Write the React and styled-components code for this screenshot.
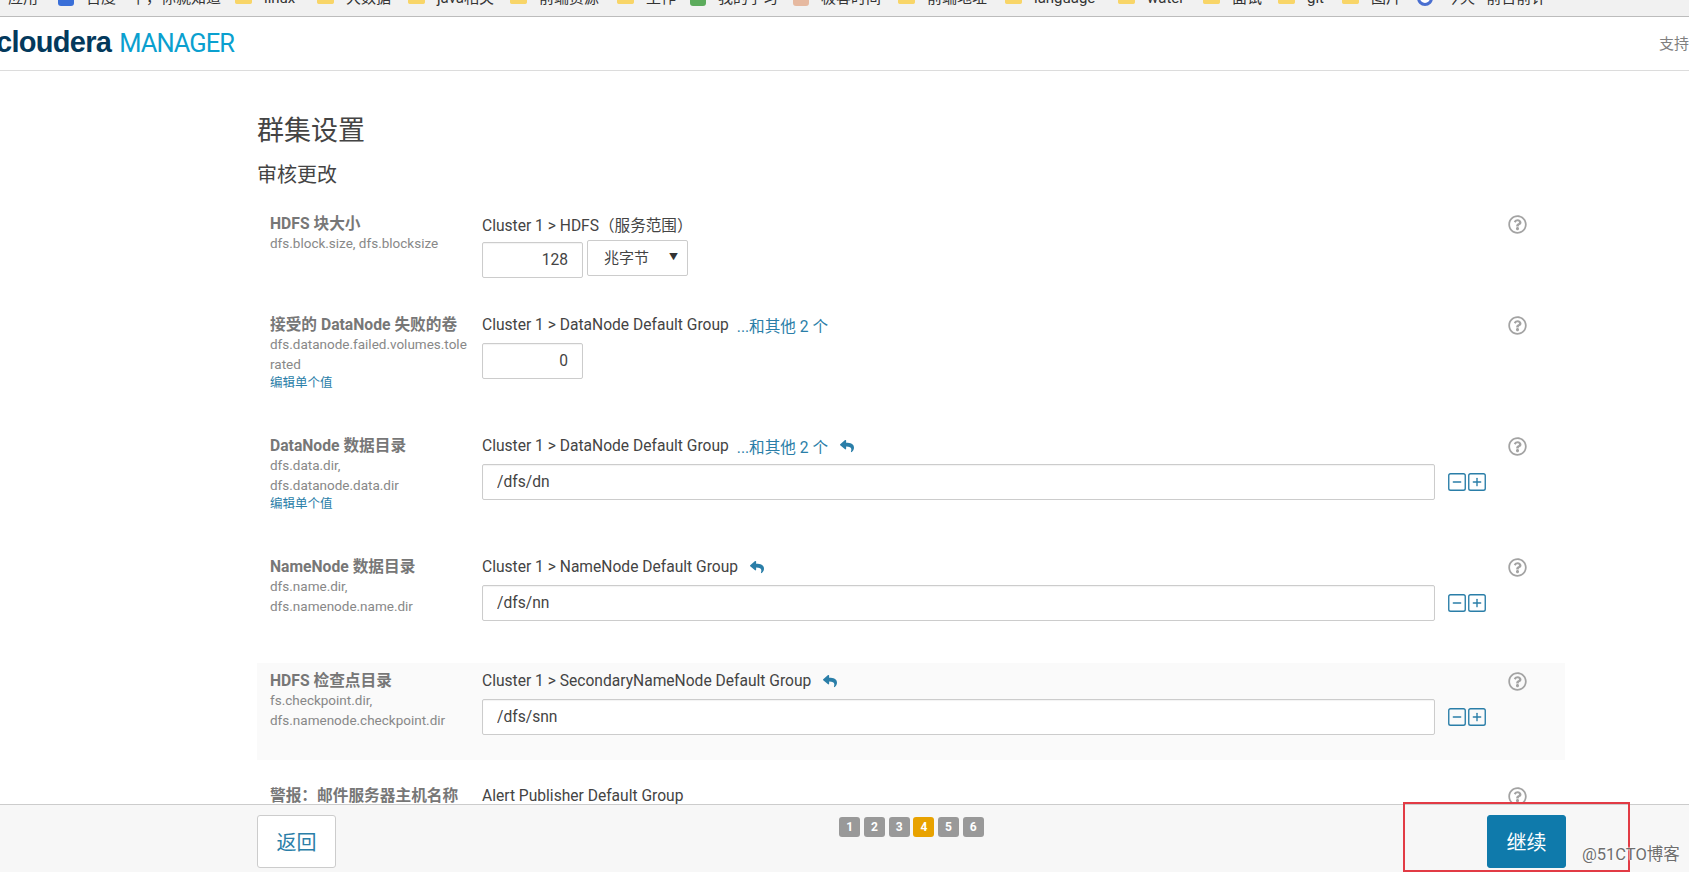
import React from "react";
import styled, { createGlobalStyle } from "styled-components";
import { FaFolder, FaReply, FaRegQuestionCircle } from "react-icons/fa";
import { SquareMinus, SquarePlus } from "lucide-react";

const SANS = `Roboto, "Noto Sans CJK SC", sans-serif`;
const TEAL = "#2a7ea8";

const GlobalStyle = createGlobalStyle`
  html, body {
    margin: 0;
    padding: 0;
    height: 100%;
    overflow: hidden;
    background: #fff;
    font-family: ${SANS};
  }
`;

const Page = styled.div`
  position: relative;
  display: flex;
  flex-direction: column;
  height: 872px;
  overflow: hidden;
`;

const BookmarkBar = styled.div`
  display: flex;
  align-items: flex-end;
  flex: 0 0 17px;
  box-sizing: border-box;
  padding: 0 0 10px 8px;
  background: #f1f1f1;
  border-bottom: 1px solid #bcbcbc;
  overflow: hidden;
  color: #333;
  font-size: 15px;
  line-height: 16px;
  white-space: nowrap;
`;

const Bookmark = styled.div`
  display: flex;
  align-items: center;
  gap: 12px;
  flex: 0 0 ${(p) => p.$w}px;
`;

const Favicon = styled.span`
  width: 16px;
  height: 16px;
  flex: none;
  border-radius: ${(p) => (p.$round ? "50%" : "3px")};
  background: ${(p) => p.$bg};
  border: ${(p) => (p.$ring ? `3px solid ${p.$ring}` : "0")};
  box-sizing: border-box;
`;

const Header = styled.header`
  display: flex;
  align-items: center;
  justify-content: space-between;
  flex: 0 0 54px;
  box-sizing: border-box;
  border-bottom: 1px solid #dcdcdc;
  overflow: hidden;
`;

const Logo = styled.div`
  display: flex;
  align-items: baseline;
  gap: 8px;
  margin-left: -4px;
  margin-top: -3px;
`;

const LogoMark = styled.span`
  color: #03395c;
  font: 700 29px/32px "Liberation Sans", sans-serif;
  letter-spacing: -0.7px;
`;

const LogoName = styled.span`
  color: #0aa0cf;
  font: 400 25.5px/32px Roboto, sans-serif;
  letter-spacing: -1px;
`;

const HeaderLink = styled.span`
  width: 30px;
  margin-top: -2px;
  color: #808080;
  font-size: 15px;
  white-space: nowrap;
`;

const Main = styled.main`
  flex: 1;
  min-height: 0;
  overflow: hidden;
  padding: 0 124px 0 257px;
`;

const Title = styled.h1`
  margin: 42px 0 0;
  color: #444;
  font-size: 27px;
  font-weight: 400;
  line-height: 36px;
`;

const SubTitle = styled.h2`
  margin: 12px 0 17px;
  color: #444;
  font-size: 20px;
  font-weight: 400;
  line-height: 28px;
`;

const Row = styled.section`
  display: grid;
  grid-template-columns: 225px 1fr 57px;
  box-sizing: border-box;
  height: ${(p) => p.$h}px;
  margin-bottom: ${(p) => (p.$active ? 18 : 20)}px;
  padding-top: 8px;
  background: ${(p) => (p.$active ? "#fafafa" : "transparent")};
`;

const LabelCol = styled.div`
  padding-left: 13px;
`;

const LabelTitle = styled.div`
  color: #777;
  font-size: 15.7px;
  font-weight: 700;
  line-height: 20px;
  white-space: nowrap;
`;

const PropName = styled.div`
  width: 198px;
  color: #888;
  font-size: 13.5px;
  line-height: 19.5px;
  word-break: break-all;
`;

const SmallLink = styled.a`
  display: block;
  color: ${TEAL};
  font-size: 12.5px;
  line-height: 18px;
`;

const ValueCol = styled.div`
  display: flex;
  flex-direction: column;
  gap: 8px;
`;

const Scope = styled.div`
  display: flex;
  align-items: center;
  height: 20px;
  color: #444;
  font-size: 15.6px;
  white-space: nowrap;
`;

const MoreLink = styled.a`
  margin-left: 8px;
  color: ${TEAL};
`;

const UndoIcon = styled(FaReply)`
  margin-left: 12px;
  color: ${TEAL};
  font-size: 14px;
`;

const Controls = styled.div`
  display: flex;
  align-items: flex-start;
  gap: 4px;
`;

const TextInput = styled.input`
  box-sizing: border-box;
  width: ${(p) => p.$w}px;
  height: 36px;
  padding: 0 14px;
  border: 1px solid #ccc;
  border-radius: 2px;
  background: #fff;
  box-shadow: inset 0 1px 1px rgba(0, 0, 0, 0.05);
  color: #444;
  font: 400 15.6px ${SANS};
  text-align: ${(p) => p.$align || "left"};
  outline: 0;
`;

const SelectBox = styled.div`
  position: relative;
  width: 101px;
  height: 36px;
  margin-top: -2px;
  &::after {
    content: "▼";
    position: absolute;
    right: 10px;
    top: 11px;
    color: #333;
    font-size: 9px;
    line-height: 12px;
    pointer-events: none;
  }
`;

const UnitSelect = styled.select`
  appearance: none;
  box-sizing: border-box;
  width: 100%;
  height: 100%;
  padding: 0 0 0 16px;
  border: 1px solid #ccc;
  border-radius: 2px;
  background: #fff;
  color: #444;
  font: 400 15px ${SANS};
`;

const ListButtons = styled.div`
  display: flex;
  gap: 0;
  margin: 7px 0 0 7px;
  color: ${TEAL};
  svg {
    margin-right: -2px;
  }
`;

const HelpCol = styled.div`
  color: #a3a3a3;
  font-size: 19px;
  line-height: 20px;
  svg {
    display: block;
    margin-top: 1px;
  }
`;

const Footer = styled.footer`
  display: grid;
  grid-template-columns: 1fr auto 1fr;
  align-items: start;
  flex: 0 0 68px;
  box-sizing: border-box;
  padding: 10px 123px 0 257px;
  background: #f7f7f7;
  border-top: 1px solid #ccc;
`;

const FooterButton = styled.button`
  justify-self: ${(p) => (p.$primary ? "end" : "start")};
  width: 79px;
  height: 53px;
  padding: 0;
  border: 1px solid ${(p) => (p.$primary ? "#0f7aab" : "#ccc")};
  border-radius: 3px;
  background: ${(p) => (p.$primary ? "#0f7aab" : "#fff")};
  color: ${(p) => (p.$primary ? "#fff" : TEAL)};
  font: 400 20px ${SANS};
`;

const Steps = styled.div`
  display: flex;
  gap: 3.7px;
  margin-top: 2px;
`;

const Step = styled.span`
  width: 21px;
  height: 20px;
  border-radius: 3px;
  background: ${(p) => (p.$active ? "#e8a200" : "#999")};
  color: #fff;
  font-size: 12px;
  font-weight: 700;
  line-height: 20px;
  text-align: center;
`;

const RedMark = styled.div`
  position: absolute;
  left: 1403px;
  top: 802px;
  width: 227px;
  height: 70px;
  box-sizing: border-box;
  border: 2.5px solid #e23b45;
  pointer-events: none;
`;

const Watermark = styled.div`
  position: absolute;
  left: 1582px;
  top: 846px;
  color: #6e6e6e;
  font-size: 16.5px;
  line-height: 18px;
  white-space: nowrap;
  text-shadow: 0 0 2px #fff, 0 0 2px #fff;
`;

const bookmarks = [
  { w: 50, text: "应用" },
  { w: 177, text: "百度一下，你就知道", bg: "#3a6fd8" },
  { w: 82, text: "linux" },
  { w: 91, text: "大数据" },
  { w: 102, text: "java相关" },
  { w: 107, text: "前端资源" },
  { w: 73, text: "工作" },
  { w: 103, text: "我的学习", bg: "#5cab5c" },
  { w: 105, text: "极客时间", bg: "#e6b9a0" },
  { w: 107, text: "前端地址" },
  { w: 113, text: "language" },
  { w: 85, text: "water" },
  { w: 75, text: "面试" },
  { w: 64, text: "git" },
  { w: 75, text: "图片" },
  { w: 200, text: "今天 · 前日前计", ring: "#4a6fd0" },
];

const settings = [
  {
    h: 81,
    title: "HDFS 块大小",
    names: ["dfs.block.size, dfs.blocksize"],
    scope: "Cluster 1 > HDFS（服务范围）",
    value: "128",
    unit: "兆字节",
  },
  {
    h: 101,
    title: "接受的 DataNode 失败的卷",
    names: ["dfs.datanode.failed.volumes.tolerated"],
    single: true,
    scope: "Cluster 1 > DataNode Default Group",
    more: true,
    value: "0",
  },
  {
    h: 101,
    title: "DataNode 数据目录",
    names: ["dfs.data.dir,", "dfs.datanode.data.dir"],
    single: true,
    scope: "Cluster 1 > DataNode Default Group",
    more: true,
    undo: true,
    path: "/dfs/dn",
  },
  {
    h: 94,
    title: "NameNode 数据目录",
    names: ["dfs.name.dir,", "dfs.namenode.name.dir"],
    scope: "Cluster 1 > NameNode Default Group",
    undo: true,
    path: "/dfs/nn",
  },
  {
    h: 97,
    active: true,
    title: "HDFS 检查点目录",
    names: ["fs.checkpoint.dir,", "dfs.namenode.checkpoint.dir"],
    scope: "Cluster 1 > SecondaryNameNode Default Group",
    undo: true,
    path: "/dfs/snn",
  },
  {
    h: 94,
    title: "警报：邮件服务器主机名称",
    names: [],
    scope: "Alert Publisher Default Group",
  },
];

function SettingRow({ item }) {
  return (
    <Row $h={item.h} $active={item.active}>
      <LabelCol>
        <LabelTitle>{item.title}</LabelTitle>
        {item.names.map((name) => (
          <PropName key={name}>{name}</PropName>
        ))}
        {item.single && <SmallLink>编辑单个值</SmallLink>}
      </LabelCol>
      <ValueCol>
        <Scope>
          {item.scope}
          {item.more && <MoreLink>...和其他 2 个</MoreLink>}
          {item.undo && <UndoIcon />}
        </Scope>
        {item.value && (
          <Controls>
            <TextInput $w={101} $align="right" defaultValue={item.value} readOnly />
            {item.unit && (
              <SelectBox>
                <UnitSelect defaultValue={item.unit}>
                  <option>{item.unit}</option>
                </UnitSelect>
              </SelectBox>
            )}
          </Controls>
        )}
        {item.path && (
          <Controls>
            <TextInput $w={953} defaultValue={item.path} readOnly />
            <ListButtons>
              <SquareMinus size={22} strokeWidth={1.5} />
              <SquarePlus size={22} strokeWidth={1.5} />
            </ListButtons>
          </Controls>
        )}
      </ValueCol>
      <HelpCol>
        <FaRegQuestionCircle />
      </HelpCol>
    </Row>
  );
}

export default function App() {
  return (
    <Page>
      <GlobalStyle />
      <BookmarkBar>
        {bookmarks.map((b) => (
          <Bookmark key={b.text} $w={b.w}>
            {b.text === "应用" ? null : b.bg || b.ring ? (
              <Favicon $bg={b.ring ? "#fff" : b.bg} $ring={b.ring} $round={!!b.ring} />
            ) : (
              <FaFolder color="#f8d568" size={17} style={{ flex: "none" }} />
            )}
            <span>{b.text}</span>
          </Bookmark>
        ))}
      </BookmarkBar>
      <Header>
        <Logo>
          <LogoMark>cloudera</LogoMark>
          <LogoName>MANAGER</LogoName>
        </Logo>
        <HeaderLink>支持</HeaderLink>
      </Header>
      <Main>
        <Title>群集设置</Title>
        <SubTitle>审核更改</SubTitle>
        {settings.map((item) => (
          <SettingRow key={item.title} item={item} />
        ))}
      </Main>
      <Footer>
        <FooterButton>返回</FooterButton>
        <Steps>
          {[1, 2, 3, 4, 5, 6].map((n) => (
            <Step key={n} $active={n === 4}>
              {n}
            </Step>
          ))}
        </Steps>
        <FooterButton $primary>继续</FooterButton>
      </Footer>
      <RedMark />
      <Watermark>@51CTO博客</Watermark>
    </Page>
  );
}
